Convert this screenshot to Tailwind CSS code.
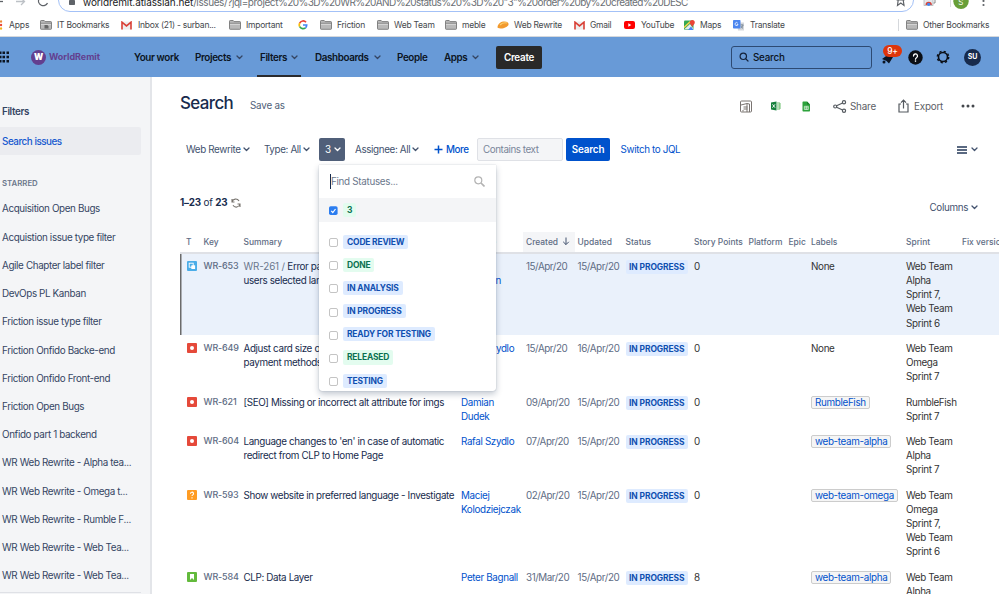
<!DOCTYPE html>
<html lang="en">
<head>
  <meta charset="UTF-8">
  <meta name="viewport" content="width=device-width, initial-scale=1.0">
  <title>Search - Jira</title>
  <script src="https://cdn.jsdelivr.net/npm/@tailwindcss/browser@4"></script>
</head>
<body class="h-[594px] w-[999px] overflow-hidden bg-white font-['Inter','Liberation_Sans',sans-serif] text-[9.86px] leading-[14.1px] tracking-[-0.370px] text-[#172b4d]">

  <!-- Shared icons -->
  <svg class="hidden">
    <symbol id="folder" viewBox="0 0 12 10">
      <path d="M.5 8.6V1.2q0-.7.7-.7h3l1 1.1h5.6q.7 0 .7.7v6.3q0 .7-.7.7H1.2q-.7 0-.7-.7z" fill="#b9b9b9" stroke="#6b6b6b" stroke-width=".8"/>
      <path d="M.8 3.3h10.4" stroke="#6b6b6b" stroke-width=".7"/>
      <path d="M1 4.3h10" stroke="#e4e4e4" stroke-width=".8"/>
    </symbol>
    <symbol id="gmail" viewBox="0 0 11 9">
      <path d="M1 .6h9v8H1z" fill="#eee"/>
      <path d="M1 8.6V1.2l4.500 3.700L10 1.200v7.400" fill="none" stroke="#d93f35" stroke-width="1.600"/>
    </symbol>
    <symbol id="chev" viewBox="0 0 7 5">
      <path d="M1 1l2.500 2.500L6 1" fill="none" stroke="currentColor" stroke-width="1.300" stroke-linecap="round" stroke-linejoin="round"/>
    </symbol>
  </svg>

  <!-- Address bar -->
  <div class="relative h-[12px] overflow-hidden bg-white">
    <svg class="absolute left-0 top-0" width="60" height="12" fill="none" stroke="#8a8d91" stroke-width="1.300">
      <path d="M0 1.500h3" stroke="#5f6368"/>
      <path d="M16 1.500h8M21-2l3.500 3.500L21 5" stroke="#bdc1c6"/>
      <path d="M39-1a4.500 4.500 0 0 0 8.500 4" stroke="#5f6368"/>
    </svg>
    <div class="absolute -top-[12px] left-[58px] h-[24px] w-[856px] rounded-full border-[1.500px] border-[#a3c1f7]"></div>
    <svg class="absolute left-[68px] top-0" width="8" height="6"><rect x="1" y="0" width="6" height="5" rx=".7" fill="#5f6368"/></svg>
    <p class="absolute -top-[5px] left-[83px] whitespace-nowrap text-[10px] tracking-[-0.600px] text-[#6b6f74]"><span class="tracking-[-0.100px] text-[#202124]">worldremit.atlassian.net</span><span class="tracking-[-0.400px]">/issues/?jql=project</span>%20%3D%20WR%20AND%20status%20%3D%20"3"%20order%20by%20created%20DESC</p>
    <svg class="absolute left-[895px] top-0" width="104" height="12">
      <path d="M1.500 0h8M3.200 0l-.7 5.500 3.300-2.400L9 5.500 8.200 0" fill="none" stroke="#5f6368" stroke-width="1.200"/>
      <rect x="29" y="-4" width="9" height="9.500" fill="#e6e8ea" stroke="#a9adb1" stroke-width=".7"/>
      <path d="M30.500 5a3.200 3.200 0 0 1 6.400 0" fill="#db4437"/><circle cx="33.700" cy="4.300" r="1.600" fill="#4285f4"/>
      <path d="M40 0v3h-1.500" stroke="#888" fill="none"/>
      <path d="M55.500 0v7" stroke="#dadce0"/>
      <circle cx="66" cy="1.300" r="7.700" fill="#689f38"/>
      <circle cx="88.500" cy="1" r="1.100" fill="#5f6368"/><circle cx="88.500" cy="5" r="1.100" fill="#5f6368"/>
      <text x="63.300" y="4.500" font-size="8" fill="#fff">S</text>
    </svg>
  </div>

  <!-- Bookmarks -->
  <div class="flex h-[25px] items-center whitespace-nowrap border-b border-[#d5d8dc] pt-[2px] text-[8.500px] tracking-[-0.250px] text-[#45484c] [&>div]:flex [&>div]:shrink-0 [&>div]:items-center [&>div]:gap-[5px] [&_svg]:shrink-0">
    <div class="w-[40px]">
      <svg width="4" height="10"><circle cx="1" cy="1.500" r="1.200" fill="#ea8a35"/><circle cx="1" cy="5" r="1.200" fill="#ea4335"/><circle cx="1" cy="8.500" r="1.200" fill="#f2b21c"/></svg><span class="tracking-[-0.100px]">Apps</span>
    </div>
    <div class="w-[81px]">
      <svg width="12" height="10"><use href="#folder"/><path d="M4.500 8.500V5h3l1 1.500v2z" fill="#666"/></svg>IT Bookmarks
    </div>
    <div class="w-[108px]"><svg class="mr-px" width="11" height="9"><use href="#gmail"/></svg>Inbox (21) - surban...</div>
    <div class="w-[69px]"><svg width="12" height="10"><use href="#folder"/></svg>Important</div>
    <div class="w-[22px]">
      <svg width="10" height="10" fill="none" stroke-width="1.700">
        <path d="M8 2.200A3.800 3.800 0 0 0 1.700 3.200" stroke="#ea4335"/><path d="M1.700 3.200a3.800 3.800 0 0 0 0 3.500" stroke="#fbbc05"/>
        <path d="M1.700 6.700a3.800 3.800 0 0 0 5.800 1.100" stroke="#34a853"/><path d="M7.500 7.800A3.800 3.800 0 0 0 8.700 5H5" stroke="#4285f4"/>
      </svg>
    </div>
    <div class="w-[57px]"><svg width="12" height="10"><use href="#folder"/></svg>Friction</div>
    <div class="w-[68px]"><svg width="12" height="10"><use href="#folder"/></svg>Web Team</div>
    <div class="w-[52px]"><svg width="12" height="10"><use href="#folder"/></svg>meble</div>
    <div class="w-[77px]">
      <svg width="12" height="10"><path d="M.5 7C1 3.500 4 1.500 7.500 1.500c3 0 4.500 1.500 4 3.200C11 6.500 7 8.700 3.500 8.500 1.500 8.400.4 8 .5 7z" fill="#f29a2e"/><path d="M3 5c2-2 5-2.500 7-2" stroke="#fbd06d" stroke-width="1.200" fill="none"/></svg>Web Rewrite
    </div>
    <div class="w-[50px]"><svg width="11" height="9"><use href="#gmail"/></svg>Gmail</div>
    <div class="w-[60px]">
      <svg class="mr-px" width="11" height="8"><rect width="11" height="8" rx="2" fill="#f00"/><path d="M4.300 2.300v3.400L7.300 4z" fill="#fff"/></svg>YouTube
    </div>
    <div class="w-[49px]">
      <svg width="11" height="10"><rect y=".5" width="9.500" height="9.500" rx="1" fill="#34a853"/><path d="M0 9.500L6 4l4 5.500z" fill="#e8eaed"/><path d="M4 10l3-3.500 2.500 3.500z" fill="#4285f4"/><path d="M0 7.500L6.500 1.500" stroke="#fbd34d" stroke-width="1.500"/><path d="M8.300 0a2.500 2.500 0 0 1 2.500 2.500C10.800 4.300 8.800 5 8.300 7 7.800 5 5.800 4.300 5.800 2.500A2.500 2.500 0 0 1 8.300 0z" fill="#ea4335"/></svg>Maps
    </div>
    <div class="w-[165px]">
      <svg width="12" height="11"><path d="M4 2.500h7v8H5z" fill="#d5d8dc"/><rect width="7.500" height="8.500" rx=".8" fill="#4c86ef"/><path d="M5 4.300H3.800M5 4.300A1.500 1.500 0 1 1 4.600 3" stroke="#fff" fill="none" stroke-width=".8"/><path d="M7.500 5h3M9 4.300V5M10 5c-.3 1.500-1 2.500-2 3.300M8 6c.4 1 1.200 2 2 2.500" stroke="#647687" fill="none" stroke-width=".7"/></svg>Translate
    </div>
    <div class="w-[8px]"><span class="h-[12px] w-px bg-[#d5d8dc]"></span></div>
    <div><svg width="12" height="10"><use href="#folder"/></svg>Other Bookmarks</div>
  </div>

  <!-- Jira navigation -->
  <nav class="flex h-[40px] items-center whitespace-nowrap bg-[#689ad7] font-semibold text-[#0b1422] [&>*]:shrink-0">
    <svg class="mr-[21px]" width="10" height="12" fill="#0b1422">
      <path d="M-1 .5h2.500v2.500H-1zM2.500.5H5v2.500H2.500zM6.500.5H9v2.500H6.500zM-1 4.700h2.500v2.500H-1zM2.500 4.700H5v2.500H2.500zM6.500 4.700H9v2.500H6.500zM-1 8.900h2.500v2.500H-1zM2.500 8.900H5v2.500H2.500zM6.500 8.900H9v2.500H6.500z"/>
    </svg>
    <div class="flex w-[103px] items-center gap-[3px]">
      <span class="flex size-[15px] items-center justify-center rounded-full bg-[#633f8f] text-[8.500px] font-black text-white">W</span>
      <span class="text-[9px] font-bold tracking-[-0.050px] text-[#633f8f]">WorldRemit</span>
    </div>
    <span class="w-[61px]">Your work</span>
    <span class="flex w-[65px] items-center gap-[5px]">Projects <svg class="text-[#344563]" width="7" height="5"><use href="#chev"/></svg></span>
    <div class="-ml-[3px] flex h-[40px] w-[44px] items-center gap-[4px] border-b-2 border-[#2b2b2e] pl-[3px] pt-[2px]">Filters <svg class="text-[#344563]" width="7" height="5"><use href="#chev"/></svg></div>
    <span class="ml-[14px] flex w-[82px] items-center gap-[5px]">Dashboards <svg class="text-[#344563]" width="7" height="5"><use href="#chev"/></svg></span>
    <span class="w-[47px]">People</span>
    <span class="flex w-[52px] items-center gap-[5px]">Apps <svg class="text-[#344563]" width="7" height="5"><use href="#chev"/></svg></span>
    <button class="h-[23px] w-[46px] rounded-[2px] bg-[#292929] tracking-[-0.250px] text-white">Create</button>
    <div class="ml-[189px] flex h-[23px] w-[141px] items-center gap-[4px] rounded-[3px] border border-[#2d4a73] pl-[7px] font-medium tracking-[-0.250px]">
      <svg width="10" height="10" fill="none" stroke="#14233c" stroke-width="1.200" stroke-linecap="round"><circle cx="4.300" cy="4.300" r="3.200"/><path d="M6.800 6.800L9 9"/></svg>
      Search
    </div>
    <div class="relative ml-[9px] h-[24px] w-[27px]">
      <svg class="absolute left-0 top-[9px]" width="13" height="11" fill="#0b1422"><path d="M1 5L8 0l4 3L8 9.500 5.500 7z"/><circle cx="3" cy="8" r="1.500"/></svg>
      <span class="absolute left-[2px] top-0 flex h-[12px] w-[19px] items-center justify-center rounded-full bg-[#de350b] text-[8.500px] font-medium text-white">9+</span>
    </div>
    <svg width="15" height="15"><circle cx="7.500" cy="7.500" r="7.200" fill="#0b0f16"/><path d="M5.500 6a2 2 0 1 1 3 1.700c-.7.4-1 .7-1 1.500" fill="none" stroke="#fff" stroke-width="1.300" stroke-linecap="round"/><circle cx="7.500" cy="11.100" r=".8" fill="#fff"/></svg>
    <svg class="ml-[13px]" width="14" height="14" fill="none" stroke="#0b0f16"><circle cx="7" cy="7" r="4.500" stroke-width="1.600"/><circle cx="7" cy="7" r="5.700" stroke-width="1.400" stroke-dasharray="2.240 2.240"/></svg>
    <span class="ml-[14px] flex size-[17px] items-center justify-center rounded-full bg-[#172b4d] text-[7px] font-bold tracking-[-0.100px] text-white">SU</span>
  </nav>

  <div class="flex h-[517px]">
    <!-- Sidebar -->
    <aside class="w-[152px] shrink-0 border-r-2 border-[#e3e5e9] bg-[#f4f5f7] text-[#344563]">
      <h2 class="pl-[2px] pt-[27px] font-semibold">Filters</h2>
      <div class="mt-[8.500px] flex h-[28.200px] w-[141px] items-center rounded-r-[2px] bg-[#ebecf0] pl-[2px] font-medium tracking-[-0.470px] text-[#1558cf]">Search issues</div>
      <p class="mt-[21px] pl-[2px] text-[7.800px] font-semibold tracking-[0px] text-[#6b778c]">STARRED</p>
      <ul id="starred" class="mt-[4.500px] w-[141px] border-b border-[#dfe1e6] pb-[3px]"></ul>
    </aside>

    <main class="relative min-w-0 flex-1 overflow-hidden pl-[28px]">
      <div class="flex h-[28px] items-center pt-[23px]">
        <h1 class="w-[70px] text-[16.900px] font-medium leading-[24px] tracking-[-0.600px]">Search</h1>
      </div>
      <!-- Title tools -->
      <div class="-mt-[13px] flex h-[28px] items-center pl-[70px] tracking-[-0.200px] text-[#505f79] [&>*]:shrink-0">
        <span class="-mt-px w-[489px]">Save as</span>
        <svg class="ml-px" width="12" height="13" fill="none" stroke="#7a7471"><rect x=".5" y="1" width="11" height="11" rx="1"/><path d="M1 5l6-1.500 2.500.5v8M3.500 7h4M3.500 9h4M3 11.500V10M7 4v8"/></svg>
        <svg class="ml-[19px]" width="10" height="10"><path d="M0 1.500L5.500.5v9L0 8.500z" fill="#15803c"/><path d="M1.500 3.300l2.500 3.400M4 3.300L1.500 6.700" stroke="#fff" stroke-width=".9"/><path d="M6 2h3v6H6M6 4h3M6 6h3" stroke="#5cb85f" stroke-width=".9" fill="none"/></svg>
        <svg class="ml-[21px]" width="9" height="11"><path d="M.5 1.200Q.5.500 1.200.500H5l3 3v6.300q0 .7-.7.700H1.200q-.7 0-.7-.7z" fill="#2da23c"/><path d="M5 .5v3h3" fill="#1c7d2b"/><path d="M2.300 5.300h4v3.200h-4zM2.300 6.900h4M4.300 5.300v3.200" fill="none" stroke="#e5f5e8" stroke-width=".7"/></svg>
        <div class="ml-[22px] flex w-[65px] items-center gap-[3px] text-[#5c6066]">
          <svg width="14" height="13" fill="none" stroke="#555a60" stroke-width="1.200"><circle cx="2.200" cy="6.500" r="1.500"/><circle cx="11" cy="2.300" r="1.600"/><circle cx="11" cy="10.700" r="1.600"/><path d="M3.600 5.800l6-2.800M3.600 7.200l6 2.800"/></svg>Share
        </div>
        <div class="flex w-[63px] items-center gap-[5px] text-[#5c6066]">
          <svg width="11" height="14" fill="none" stroke="#555a60" stroke-width="1.200"><path d="M3 5H1v8h9V5H8M5.500 9.500V1.500M3 3.700L5.500 1.200 8 3.700"/></svg>Export
        </div>
        <svg width="14" height="4" fill="#44474c"><circle cx="2" cy="2" r="1.500"/><circle cx="7" cy="2" r="1.500"/><circle cx="12" cy="2" r="1.500"/></svg>
      </div>

      <!-- Filter bar -->
      <div class="mt-[18px] flex h-[23px] items-center whitespace-nowrap pl-[6px] text-[#42526e] [&>*]:shrink-0">
        <span class="flex w-[78px] items-center gap-[2px]">Web Rewrite <svg width="7" height="5"><use href="#chev"/></svg></span>
        <span class="flex w-[55px] items-center gap-[2px]">Type: All <svg width="7" height="5"><use href="#chev"/></svg></span>
        <span class="flex h-[23px] w-[26px] items-center gap-[3px] rounded-[2px] bg-[#505f79] pl-[6px] text-white">3 <svg width="7" height="5"><use href="#chev"/></svg></span>
        <span class="ml-[10px] flex w-[79px] items-center gap-[2px]">Assignee: All <svg width="7" height="5"><use href="#chev"/></svg></span>
        <span class="flex w-[43px] items-center gap-[3px] font-medium tracking-[-0.450px] text-[#0052cc]"><svg width="9" height="9" stroke="#0052cc" stroke-width="1.500"><path d="M4.500.5v8M.5 4.500h8"/></svg>More</span>
        <span class="flex h-[23px] w-[86px] items-center rounded-[2px] border border-[#dfe1e6] bg-[#f4f5f7] pl-[5px] tracking-[-0.450px] text-[#7a869a]">Contains text</span>
        <button class="ml-[3px] h-[23px] w-[44px] rounded-[2px] bg-[#0052cc] font-semibold tracking-[-0.120px] text-white">Search</button>
        <a class="ml-[10.500px] w-[336.500px] text-[#0052cc]">Switch to JQL</a>
        <svg width="11" height="8" stroke="#253858" stroke-width="1.600"><path d="M0 1h10M0 4h10M0 7h10"/></svg>
        <svg class="ml-[3px]" width="7" height="5"><use href="#chev"/></svg>
      </div>

      <!-- Result count -->
      <div class="mt-[31.500px] flex h-[20px] items-center gap-[4px] whitespace-nowrap tracking-[-0.200px]">
        <p><b class="font-bold">1–23</b> of <b class="font-bold">23</b></p>
        <svg width="10" height="10" fill="none" stroke="#77736e" stroke-width="1.100"><path d="M1 4A3.800 3.800 0 0 1 8 3M9 6a3.800 3.800 0 0 1-7 1.200M1 1v3h2.500M9 9V6H6.500"/></svg>
        <span class="ml-auto mt-[9px] flex items-center gap-[3px] pr-[21px] tracking-[-0.350px] text-[#42526e]">Columns <svg width="7" height="5"><use href="#chev"/></svg></span>
      </div>

      <!-- Issue table -->
      <div class="mt-[19.500px] w-[819px] overflow-hidden">
        <div class="grid h-[21.500px] grid-cols-[23.500px_40px_217.500px_62px_54.500px_48px_68.500px_54.500px_40px_22.500px_95px_56px_60px] items-center whitespace-nowrap border-b-2 border-[#dfe1e6] text-[8.450px] font-medium tracking-[0px] text-[#5e6c84]">
          <span class="pl-[6px]">T</span><span>Key</span><span>Summary</span><span class="tracking-[-0.350px]">Assignee</span>
          <span class="mr-[3px] flex h-full items-center gap-[4px] bg-[#f4f5f7] pl-[3px]">Created <svg width="8" height="9" fill="none" stroke="#42526e"><path d="M4 .5v7M1.200 4.800L4 7.600l2.800-2.800"/></svg></span>
          <span>Updated</span><span>Status</span><span>Story Points</span><span>Platform</span><span>Epic</span><span>Labels</span><span>Sprint</span><span>Fix versions</span>
        </div>
        <div id="issues"></div>
      </div>

      <!-- Status dropdown -->
      <div class="absolute left-[167px] top-[88px] h-[226px] w-[177px] overflow-hidden rounded-b-[3px] bg-white shadow-[0_0_1px_rgba(9,30,66,.4),0_3px_6px_rgba(9,30,66,.25)]">
        <div class="flex h-[33px] items-center justify-between pl-[11px] pr-[11px] text-[#6b778c]">
          <span class="border-l border-[#172b4d] tracking-[-0.300px]">Find Statuses...</span>
          <svg width="11" height="11" fill="none" stroke="#b3b3b3" stroke-width="1.200"><circle cx="4.300" cy="4.300" r="3.500"/><path d="M7 7l3.500 3.500" stroke-width="1.700"/></svg>
        </div>
        <div class="flex h-[23.500px] items-center gap-[5px] bg-[#f4f5f7] pl-[10px]">
          <svg class="mt-px" width="9" height="9"><rect y=".3" width="8.600" height="8.600" rx="1.700" fill="#2c7df0"/><path d="M2.200 4.900l1.600 1.600L6.500 3" fill="none" stroke="#fff" stroke-width="1.200"/></svg>
          <span class="rounded-[2px] bg-[#e3fcef] px-[4px] text-[8.450px] font-bold tracking-[0px] text-[#0b7150]">3</span>
        </div>
        <div id="statuses" class="pt-[8.500px]"></div>
      </div>
    </main>
  </div>

  <script>
    const starred = [
      'Acquisition Open Bugs', 'Acquistion issue type filter', 'Agile Chapter label filter', 'DevOps PL Kanban',
      'Friction issue type filter', 'Friction Onfido Backe-end', 'Friction Onfido Front-end', 'Friction Open Bugs',
      'Onfido part 1 backend', 'WR Web Rewrite - Alpha tea...', 'WR Web Rewrite - Omega t...',
      'WR Web Rewrite - Rumble F...', 'WR Web Rewrite - Web Tea...', 'WR Web Rewrite - Web Tea...'
    ];
    document.getElementById('starred').innerHTML = starred.map(name =>
      `<li class="flex h-[28.230px] items-center whitespace-nowrap pl-[2px]">${name}</li>`).join('');

    const colors = {
      blue: 'bg-[#deebff] text-[#0f4fb0]',
      green: 'bg-[#e3fcef] text-[#0b7150]'
    };
    const statuses = [
      ['CODE REVIEW', 'blue'], ['DONE', 'green'], ['IN ANALYSIS', 'blue'], ['IN PROGRESS', 'blue'],
      ['READY FOR TESTING', 'blue'], ['RELEASED', 'green'], ['TESTING', 'blue']
    ];
    document.getElementById('statuses').innerHTML = statuses.map(([name, color]) => `
      <div class="flex h-[23.200px] items-center gap-[5px] pl-[10px]">
        <span class="mt-[2px] size-[9px] rounded-[2px] border border-[#c4c4c4] bg-white"></span>
        <span class="rounded-[2px] px-[4px] text-[8.450px] font-bold tracking-[-0.170px] ${colors[color]}">${name}</span>
      </div>`).join('');

    const icons = {
      subtask: '<rect width="10" height="10" rx="1" fill="#4bade8"/><rect x="2.200" y="2.200" width="4" height="4" fill="none" stroke="#fff" stroke-width=".9"/><rect x="4.300" y="4.300" width="3.800" height="3.800" rx=".5" fill="#fff"/>',
      bug: '<rect width="10" height="10" rx="1" fill="#e5493a"/><circle cx="5" cy="5" r="2" fill="#fff"/>',
      question: '<rect width="10" height="10" rx="1" fill="#ff9c23"/><path d="M3.500 3.700a1.500 1.500 0 1 1 2.300 1.200c-.6.400-.8.600-.8 1.200M5 7.200v1.200" fill="none" stroke="#fff" stroke-width="1.100"/>',
      story: '<rect width="10" height="10" rx="1" fill="#63ba3c"/><path d="M3 2h4v6L5 6 3 8z" fill="#fff"/>'
    };
    const issues = [
      { icon: 'subtask', key: 'WR-653', summary: '<span class="text-[#6b778c] tracking-[-0.150px]">WR-261 /</span> Error page<br>users selected lang', who: 'Damian<br>Kowlman', created: '15/Apr/20', updated: '15/Apr/20', points: 0, sprint: 'Web Team<br>Alpha<br>Sprint 7,<br>Web Team<br>Sprint 6', selected: true },
      { icon: 'bug', key: 'WR-649', summary: 'Adjust card size on<br>payment methods', who: 'Rafal Szydlo', created: '15/Apr/20', updated: '16/Apr/20', points: 0, sprint: 'Web Team<br>Omega<br>Sprint 7' },
      { icon: 'bug', key: 'WR-621', summary: '[SEO] Missing or incorrect alt attribute for imgs', who: 'Damian<br>Dudek', created: '09/Apr/20', updated: '15/Apr/20', points: 0, label: 'RumbleFish', sprint: 'RumbleFish<br>Sprint 7' },
      { icon: 'bug', key: 'WR-604', summary: "Language changes to 'en' in case of automatic<br>redirect from CLP to Home Page", who: 'Rafal Szydlo', created: '07/Apr/20', updated: '15/Apr/20', points: 0, label: 'web-team-alpha', sprint: 'Web Team<br>Alpha<br>Sprint 7' },
      { icon: 'question', key: 'WR-593', summary: 'Show website in preferred language - Investigate', who: 'Maciej<br>Kolodziejczak', created: '02/Apr/20', updated: '15/Apr/20', points: 0, label: 'web-team-omega', sprint: 'Web Team<br>Omega<br>Sprint 7,<br>Web Team<br>Sprint 6' },
      { icon: 'story', key: 'WR-584', summary: 'CLP: Data Layer', who: 'Peter Bagnall', created: '31/Mar/20', updated: '15/Apr/20', points: 8, label: 'web-team-alpha', sprint: 'Web Team<br>Alpha<br>Sprint 7' }
    ];
    document.getElementById('issues').innerHTML = issues.map(i => `
      <div class="grid grid-cols-[23.500px_40px_217.500px_65px_51.500px_48px_68.500px_54.500px_40px_22.500px_95px_56px_60px] items-start whitespace-nowrap py-[5.680px] ${i.selected ? 'bg-[#eaf1fb] shadow-[inset_1.500px_0_0_#6b6b6b]' : ''}">
        <svg class="ml-[7px] mt-[2px]" width="10" height="10">${icons[i.icon]}</svg>
        <span class="text-[9px] font-medium tracking-[-0.150px] text-[#5e6c84]">${i.key}</span>
        <span>${i.summary}</span>
        <span class="tracking-[-0.350px] text-[#0052cc]">${i.who}</span>
        <span class="tracking-[-0.450px] text-[#5e6c84]">${i.created}</span>
        <span class="tracking-[-0.370px] text-[#5e6c84]">${i.updated}</span>
        <span><span class="inline-block h-[14px] rounded-[2px] bg-[#deebff] px-[3.500px] text-[8.450px] font-bold tracking-[-0.080px] text-[#0f4fb0]">IN PROGRESS</span></span>
        <span class="text-[#333]">${i.points}</span>
        <span></span>
        <span></span>
        <span class="tracking-[-0.340px] text-[#333]">${i.label ? `<span class="-mt-[1px] inline-block h-[13px] rounded-[2px] border border-[#ccc] bg-[#f5f5f5] px-[3px] leading-[11px] text-[#0052cc]">${i.label}</span>` : 'None'}</span>
        <span class="tracking-[-0.350px] text-[#333]">${i.sprint}</span>
        <span></span>
      </div>`).join('');
  </script>
</body>
</html>
